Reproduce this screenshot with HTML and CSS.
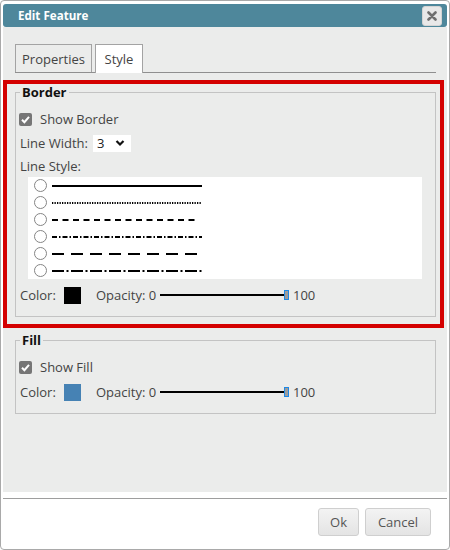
FILE: index.html
```html
<!DOCTYPE html>
<html>
<head>
<meta charset="utf-8">
<link rel="stylesheet" href="styles.css">
</head>
<body>
<div class="dialog">
  <div class="header">
    <span class="title">Edit Feature</span>
    <span class="close"><svg width="10" height="10" viewBox="0 0 10 10"><path d="M1.5 1.5 L8.5 8.5 M8.5 1.5 L1.5 8.5" stroke="#6f6f6f" stroke-width="2.6" stroke-linecap="round"/></svg></span>
  </div>
  <div class="content">
    <div class="tabs">
      <div class="tab tab-props">Properties</div>
      <div class="tab tab-style active">Style</div>
    </div>
    <fieldset class="group group-border">
      <legend>Border</legend>
      <div class="row row-check"><span class="check"><svg width="13" height="13" viewBox="0 0 13 13"><path d="M3 6.8 L5.4 9.2 L10 3.8" fill="none" stroke="#fff" stroke-width="2"/></svg></span><span class="lbl">Show Border</span></div>
      <div class="row row-width"><span class="lbl lbl-width">Line Width:</span><span class="select">3<svg width="10" height="8" viewBox="0 0 10 8"><path d="M1.5 2 L5 5.5 L8.5 2" fill="none" stroke="#111" stroke-width="2.2"/></svg></span></div>
      <div class="row row-style"><span class="lbl">Line Style:</span></div>
      <div class="styles">
        <div class="style-row"><span class="radio"></span><svg class="ln" width="150" height="4"><line x1="0" y1="2" x2="150" y2="2" stroke="#000" stroke-width="2"/></svg></div>
        <div class="style-row"><span class="radio"></span><svg class="ln" width="150" height="4"><line x1="0" y1="2" x2="150" y2="2" stroke="#000" stroke-width="2" stroke-dasharray="1.3 1.2"/></svg></div>
        <div class="style-row"><span class="radio"></span><svg class="ln" width="150" height="4"><line x1="0" y1="2" x2="147" y2="2" stroke="#000" stroke-width="2" stroke-dasharray="6 4.5"/></svg></div>
        <div class="style-row"><span class="radio"></span><svg class="ln" width="150" height="4"><line x1="0" y1="2" x2="150" y2="2" stroke="#000" stroke-width="2" stroke-dasharray="5 2 1.5 2"/></svg></div>
        <div class="style-row"><span class="radio"></span><svg class="ln" width="150" height="4"><line x1="0" y1="2" x2="150" y2="2" stroke="#000" stroke-width="2" stroke-dasharray="12 7"/></svg></div>
        <div class="style-row"><span class="radio"></span><svg class="ln" width="150" height="4"><line x1="0" y1="2" x2="150" y2="2" stroke="#000" stroke-width="2" stroke-dasharray="12 2.5 2 2.5"/></svg></div>
      </div>
      <div class="row row-color">
        <span class="lbl lbl-color">Color:</span>
        <span class="swatch swatch-black"></span>
        <span class="lbl lbl-op">Opacity: 0</span>
        <span class="slider"><span class="thumb"></span></span>
        <span class="lbl lbl-max">100</span>
      </div>
    </fieldset>
    <fieldset class="group group-fill">
      <legend>Fill</legend>
      <div class="row row-check"><span class="check"><svg width="13" height="13" viewBox="0 0 13 13"><path d="M3 6.8 L5.4 9.2 L10 3.8" fill="none" stroke="#fff" stroke-width="2"/></svg></span><span class="lbl">Show Fill</span></div>
      <div class="row row-color row-color-fill">
        <span class="lbl lbl-color">Color:</span>
        <span class="swatch swatch-blue"></span>
        <span class="lbl lbl-op">Opacity: 0</span>
        <span class="slider"><span class="thumb"></span></span>
        <span class="lbl lbl-max">100</span>
      </div>
    </fieldset>
  </div>
  <div class="footer">
    <button class="btn btn-ok">Ok</button>
    <button class="btn btn-cancel">Cancel</button>
  </div>
  <div class="highlight"></div>
</div>
</body>
</html>
```
FILE: styles.css
```css
* { box-sizing: border-box; }
html, body { margin: 0; padding: 0; background: #fff; }
body { font-family: "Open Sans", "Noto Sans", sans-serif; font-size: 13px; color: #444; }

.dialog {
  position: relative;
  width: 450px;
  height: 550px;
  border: 1px solid #a9a9a9;
  border-radius: 4px;
  padding: 3px 2px 0 2px;
  display: flex;
  flex-direction: column;
  background: #fff;
}

.header {
  height: 23px;
  background: #4e879b;
  border-radius: 3px;
  display: flex;
  align-items: center;
  justify-content: space-between;
  padding: 0 5px 0 15px;
}
.title { color: #fff; font-weight: 700; font-size: 11.6px; }
.close {
  width: 20px; height: 20px;
  background: #e8e8e8;
  border: 1px solid #d4d4d4;
  border-radius: 3px;
  display: flex; align-items: center; justify-content: center;
}

.content {
  height: 465px;
  background: #ebeceb;
  padding: 17px 11px 0 12px;
}

.tabs {
  display: flex;
  gap: 3px;
  border-bottom: 1px solid #8f8f8f;
  height: 29px;
}
.tab {
  height: 28px;
  border: 1px solid #a3a3a3;
  border-bottom: none;
  display: flex; align-items: center; justify-content: center;
  font-size: 13px;
  color: #444;
  background: #ebeceb;
}
.tab-props { width: 77px; }
.tab-style { width: 48px; }
.tab.active { background: #fff; height: 29px; margin-bottom: -1px; position: relative; }

.group {
  margin: 0;
  border: 1px solid #c3c3c3;
  padding: 9px 13px 11px 4px;
  display: flex;
  flex-direction: column;
}
.group-border { margin-top: 11px; }
.group-fill { margin-top: 15px; }
.group legend {
  font-weight: 700;
  font-size: 13px;
  line-height: 16px;
  color: #111;
  padding: 0 2px;
}

.row { display: flex; align-items: center; }
.row-check { height: 20px; }
.row-width { height: 24px; margin-top: 2px; }
.row-style { height: 21px; }
.row-color { height: 20px; margin-top: 6px; }
.row-color-fill { margin-top: 5px; }
.lbl { font-size: 13px; color: #444; white-space: nowrap; }

.check {
  width: 13px; height: 13px;
  background: #767676;
  border-radius: 2px;
  display: flex;
  margin-left: -1px;
  margin-right: 8px;
}

.lbl-width { width: 73px; }
.select {
  width: 38px; height: 17px;
  background: #fff;
  display: flex; align-items: center; justify-content: space-between;
  padding: 0 6px 0 4px;
  font-size: 13px;
  color: #222;
}

.styles {
  margin: 1px 0 0 8px;
  background: #fff;
  height: 102px;
  padding-left: 6px;
  display: flex;
  flex-direction: column;
}
.style-row { height: 17px; display: flex; align-items: center; }
.radio {
  width: 13px; height: 13px;
  border: 1px solid #858585;
  border-radius: 50%;
  background: #fff;
  margin-right: 5px;
}
.ln { display: block; }

.lbl-color { width: 44px; }
.swatch { width: 17px; height: 17px; }
.swatch-black { background: #000; }
.swatch-blue { background: #4682b4; }
.lbl-op { margin-left: 15px; width: 64px; }
.slider {
  position: relative;
  width: 129px; height: 10px;
  display: flex; align-items: center;
  background: linear-gradient(#000, #000) 0 4px / 100% 2px no-repeat;
}
.thumb {
  position: absolute;
  right: 0; top: 0;
  width: 5px; height: 10px;
  background: #9c9c9c;
  border: 1px solid #1e88e5;
}
.lbl-max { margin-left: 4px; }

.footer {
  margin-top: 6px;
  border-top: 1px solid #9e9e9e;
  flex: 1;
  display: flex;
  justify-content: flex-end;
  align-items: flex-start;
  gap: 6px;
  padding: 9px 16px 0 0;
}
.btn {
  height: 28px;
  border: 1px solid #cfcfcf;
  border-radius: 3px;
  background: linear-gradient(#f3f3f3, #e4e4e4);
  font-family: "Open Sans", "Noto Sans", sans-serif;
  font-size: 13px;
  color: #555;
  padding: 0;
}
.btn-ok { width: 41px; }
.btn-cancel { width: 66px; }

.highlight {
  position: absolute;
  left: 2px; top: 79px;
  width: 441px; height: 248px;
  border: 4px solid #d40000;
}
```
